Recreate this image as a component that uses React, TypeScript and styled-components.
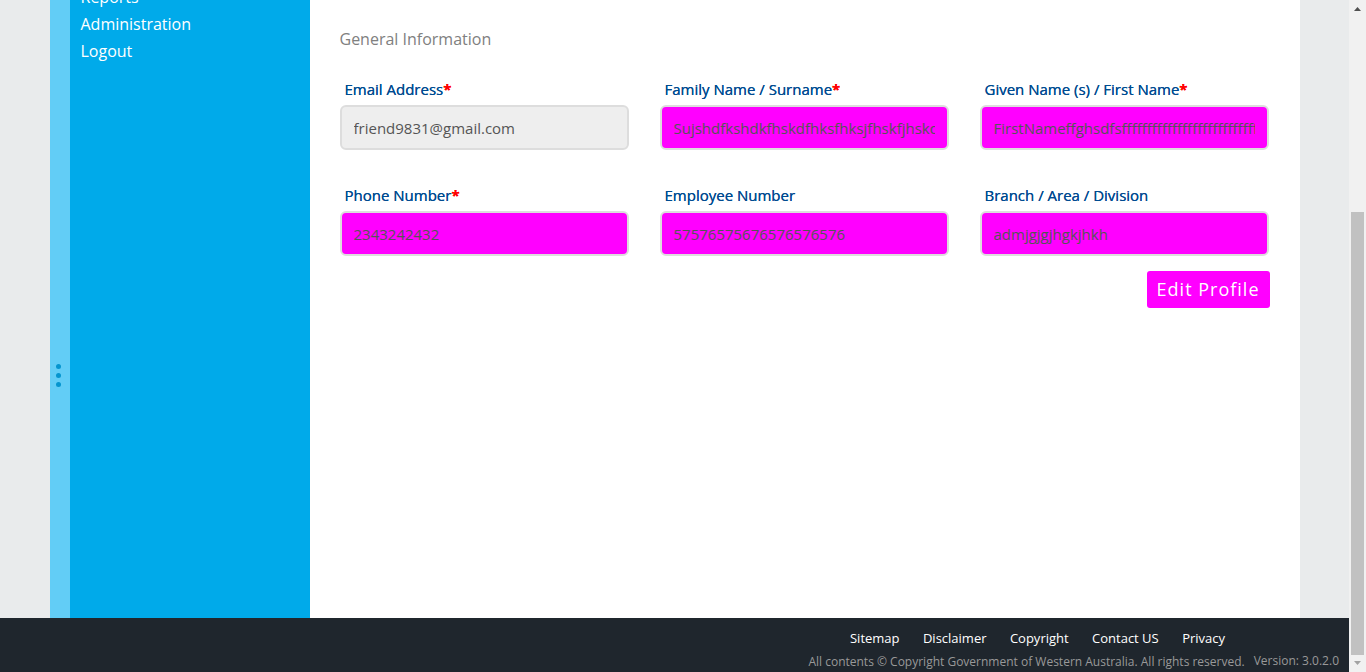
import React from "react";
import styled, { createGlobalStyle } from "styled-components";

const GlobalStyle = createGlobalStyle`
  * { box-sizing: border-box; }
  body {
    margin: 0;
    background: #e9ebec;
    font-family: "Open Sans", "Noto Sans", sans-serif;
    font-size: 15px;
    line-height: 20px;
    overflow: hidden;
  }
`;

const Viewport = styled.div`
  display: grid;
  grid-template-columns: minmax(0, 1fr) 17px;
  height: 100vh;
`;

const Page = styled.div`
  display: flex;
  flex-direction: column;
  min-height: 0;
`;

const Body = styled.div`
  flex: 1;
  min-height: 0;
  display: flex;
  width: 100%;
  max-width: 1250px;
  margin: 0 auto;
  overflow: hidden;
`;

const Handle = styled.div`
  flex: none;
  width: 20px;
  padding: 364px 0 0 6px;
  display: flex;
  flex-direction: column;
  gap: 4px;
  background: #62cdf6;
`;

const Dot = styled.span`
  width: 5px;
  height: 5px;
  border-radius: 50%;
  background: #0595cf;
`;

const Sidebar = styled.nav`
  flex: none;
  width: 240px;
  padding-left: 11px;
  background: #00aaea;
`;

const NavList = styled.ul`
  list-style: none;
  margin: -16px 0 0;
  padding: 0;
  font-size: 16px;
  line-height: 27px;
`;

const NavLink = styled.a`
  color: #fff;
  text-decoration: none;
`;

const Main = styled.main`
  flex: 1;
  min-width: 0;
  padding: 29px 30px;
  background: #fff;
`;

const Heading = styled.h2`
  margin: 0 0 30px;
  font-size: 16px;
  font-weight: 400;
  color: #808080;
`;

const Form = styled.form`
  display: flex;
  flex-direction: column;
`;

const Fields = styled.div`
  display: grid;
  grid-template-columns: repeat(3, minmax(0, 1fr));
  gap: 35px 31px;
  padding-right: 1px;
`;

const Field = styled.div`
  display: flex;
  flex-direction: column;
  gap: 6px;
`;

const Label = styled.label`
  padding-left: 5px;
  color: #004b91;
  text-shadow: 0 0 0 currentColor;
`;

const Required = styled.span`
  color: #f00;
  font-weight: 700;
`;

const Input = styled.input<{ $locked?: boolean }>`
  width: 100%;
  height: 45px;
  padding: 0 12px;
  border: 2px solid #ddd;
  border-radius: 6px;
  background: ${(p) => (p.$locked ? "#eee" : "#f0f")};
  color: #555;
  font: 400 15px/20px "Open Sans", "Noto Sans", sans-serif;
  outline: none;
`;

const EditButton = styled.button`
  align-self: flex-end;
  height: 37px;
  margin-top: 15px;
  padding: 0 10px 2px;
  border: 0;
  border-radius: 3px;
  background: #f0f;
  color: #fff;
  font: 400 18px/24px "Open Sans", "Noto Sans", sans-serif;
  letter-spacing: 1px;
`;

const Footer = styled.footer`
  flex: none;
  height: 54px;
  padding: 10px 10px 0;
  background: #1f262d;
`;

const FooterLinks = styled.div`
  padding-right: 104px;
  text-align: right;
  font-size: 13px;
`;

const FooterLink = styled.a`
  padding: 0 10px;
  color: #fff;
  text-decoration: none;
`;

const Legal = styled.div`
  display: flex;
  justify-content: flex-end;
  gap: 9px;
  padding-top: 4px;
  font-size: 12px;
  line-height: 18px;
  color: #999;
`;

const Rights = styled.span`
  padding-top: 1px;
`;

const Scrollbar = styled.div`
  display: flex;
  flex-direction: column;
  align-items: center;
  padding: 0 2px;
  background: #f1f1f1;
`;

const Arrow = styled.svg`
  flex: none;
  width: 13px;
  height: 17px;
`;

const Track = styled.div`
  flex: 1;
  width: 100%;
  padding-top: 195px;
  display: flex;
`;

const Thumb = styled.div`
  flex: 1;
  background: #c1c1c1;
`;

const nav = ["Reports", "Administration", "Logout"];
const links = ["Sitemap", "Disclaimer", "Copyright", "Contact US", "Privacy"];
const fields = [
  { id: "email", label: "Email Address", value: "friend9831@gmail.com", required: true, locked: true },
  { id: "family", label: "Family Name / Surname", value: "Sujshdfkshdkfhskdfhksfhksjfhskfjhskdjf", required: true },
  { id: "given", label: "Given Name (s) / First Name", value: "FirstNameffghsdfsfffffffffffffffffffffffffff", required: true },
  { id: "phone", label: "Phone Number", value: "2343242432", required: true },
  { id: "employee", label: "Employee Number", value: "57576575676576576576" },
  { id: "branch", label: "Branch / Area / Division", value: "admjgjgjhgkjhkh" },
];

export default function App() {
  return (
    <>
      <GlobalStyle />
      <Viewport>
        <Page>
          <Body>
            <Handle>
              <Dot />
              <Dot />
              <Dot />
            </Handle>
            <Sidebar>
              <NavList>
                {nav.map((n) => (
                  <li key={n}>
                    <NavLink href="#">{n}</NavLink>
                  </li>
                ))}
              </NavList>
            </Sidebar>
            <Main>
              <Heading>General Information</Heading>
              <Form>
                <Fields>
                  {fields.map((f) => (
                    <Field key={f.id}>
                      <Label htmlFor={f.id}>
                        {f.label}
                        {f.required && <Required>*</Required>}
                      </Label>
                      <Input id={f.id} defaultValue={f.value} readOnly $locked={f.locked} />
                    </Field>
                  ))}
                </Fields>
                <EditButton type="button">Edit Profile</EditButton>
              </Form>
            </Main>
          </Body>
          <Footer>
            <FooterLinks>
              {links.map((l) => (
                <React.Fragment key={l}>
                  <FooterLink href="#">{l}</FooterLink>{" "}
                </React.Fragment>
              ))}
            </FooterLinks>
            <Legal>
              <Rights>All contents © Copyright Government of Western Australia. All rights reserved.</Rights>
              <span>Version: 3.0.2.0</span>
            </Legal>
          </Footer>
        </Page>
        <Scrollbar aria-hidden="true">
          <Arrow viewBox="0 0 13 17">
            <path d="M3 11 L6.5 7 L10 11 Z" fill="#505050" />
          </Arrow>
          <Track>
            <Thumb />
          </Track>
          <Arrow viewBox="0 0 13 17">
            <path d="M3 6 L6.5 10 L10 6 Z" fill="#a3a3a3" />
          </Arrow>
        </Scrollbar>
      </Viewport>
    </>
  );
}
